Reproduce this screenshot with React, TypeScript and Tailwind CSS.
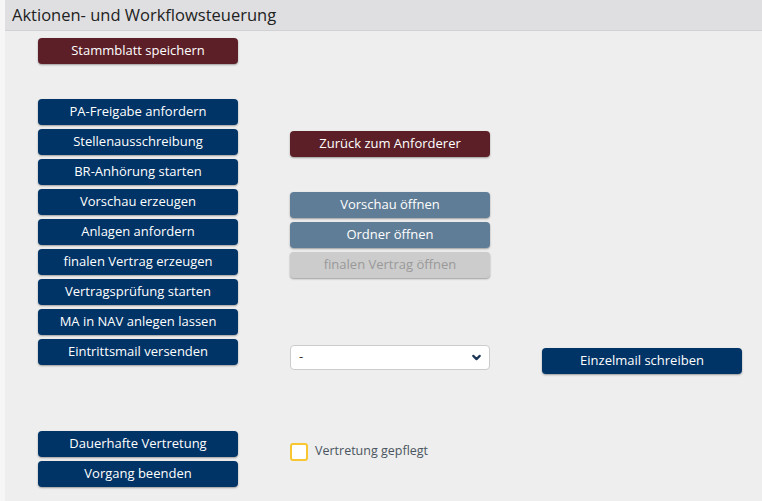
import { ChevronDown } from 'lucide-react';

type Variant = 'red' | 'navy' | 'slate' | 'disabled';

const variants: Record<Variant, string> = {
    red: 'bg-[#5c1f28] text-white',
    navy: 'bg-[#003366] text-white',
    slate: 'bg-[#5f7d96] text-white',
    disabled: 'bg-[#cccccc] text-[#999999]',
};

const Btn = ({ label, variant = 'navy', className = '' }: { label: string; variant?: Variant; className?: string }) => (
    <button
        className={`w-[200px] h-[26px] rounded-[4px] text-[13px] leading-none shadow-[0_1px_2px_rgba(0,0,0,0.35)] ${variants[variant]} ${className}`}
    >
        {label}
    </button>
);

export default function App() {
    return (
        <div className="w-[762px] h-[501px] bg-[#f6f6f6] pl-[5px] font-['Open_Sans',sans-serif]">
            <div className="h-full bg-[#eeeeee]">
                <div className="h-[31px] bg-[#dfdfe1] border-b border-[#d2d2d4] pl-[7px] flex items-center">
                    <h2 className="text-[16.5px] text-[#222222]">Aktionen- und Workflowsteuerung</h2>
                </div>
                <div className="pl-[33px] pt-[6px]">
                    <Btn label="Stammblatt speichern" variant="red" />

                    <div className="mt-[35px] grid grid-cols-[200px_200px_200px] gap-x-[52px] gap-y-[4px] auto-rows-[26px]">
                        <Btn label="PA-Freigabe anfordern" />
                        <div />
                        <div />

                        <Btn label="Stellenausschreibung" />
                        <Btn label="Zurück zum Anforderer" variant="red" className="mt-[2px]" />
                        <div />

                        <Btn label="BR-Anhörung starten" />
                        <div />
                        <div />

                        <Btn label="Vorschau erzeugen" />
                        <Btn label="Vorschau öffnen" variant="slate" className="mt-[3px]" />
                        <div />

                        <Btn label="Anlagen anfordern" />
                        <Btn label="Ordner öffnen" variant="slate" className="mt-[3px]" />
                        <div />

                        <Btn label="finalen Vertrag erzeugen" />
                        <Btn label="finalen Vertrag öffnen" variant="disabled" className="mt-[3px]" />
                        <div />

                        <Btn label="Vertragsprüfung starten" />
                        <div />
                        <div />

                        <Btn label="MA in NAV anlegen lassen" />
                        <div />
                        <div />

                        <Btn label="Eintrittsmail versenden" />
                        <div className="mt-[6px] h-[25px] w-[200px] bg-white border border-[#cccccc] rounded-[4px] flex items-center justify-between pl-[8px] pr-[6px] text-[13px] text-[#333333]">
                            <span>-</span>
                            <ChevronDown size={13} strokeWidth={4} className="text-[#1d3557]" />
                        </div>
                        <Btn label="Einzelmail schreiben" className="mt-[9px]" />
                    </div>

                    <div className="mt-[66px] flex gap-x-[52px]">
                        <div className="flex flex-col gap-[4px]">
                            <Btn label="Dauerhafte Vertretung" />
                            <Btn label="Vorgang beenden" />
                        </div>
                        <label className="flex items-center gap-[7px] h-[26px] mt-[8px]">
                            <span className="w-[18px] h-[18px] bg-white border-2 border-[#f8c630] rounded-[3px]" />
                            <span className="text-[12.5px] text-[#4a5560]">Vertretung gepflegt</span>
                        </label>
                    </div>
                </div>
            </div>
        </div>
    );
}
